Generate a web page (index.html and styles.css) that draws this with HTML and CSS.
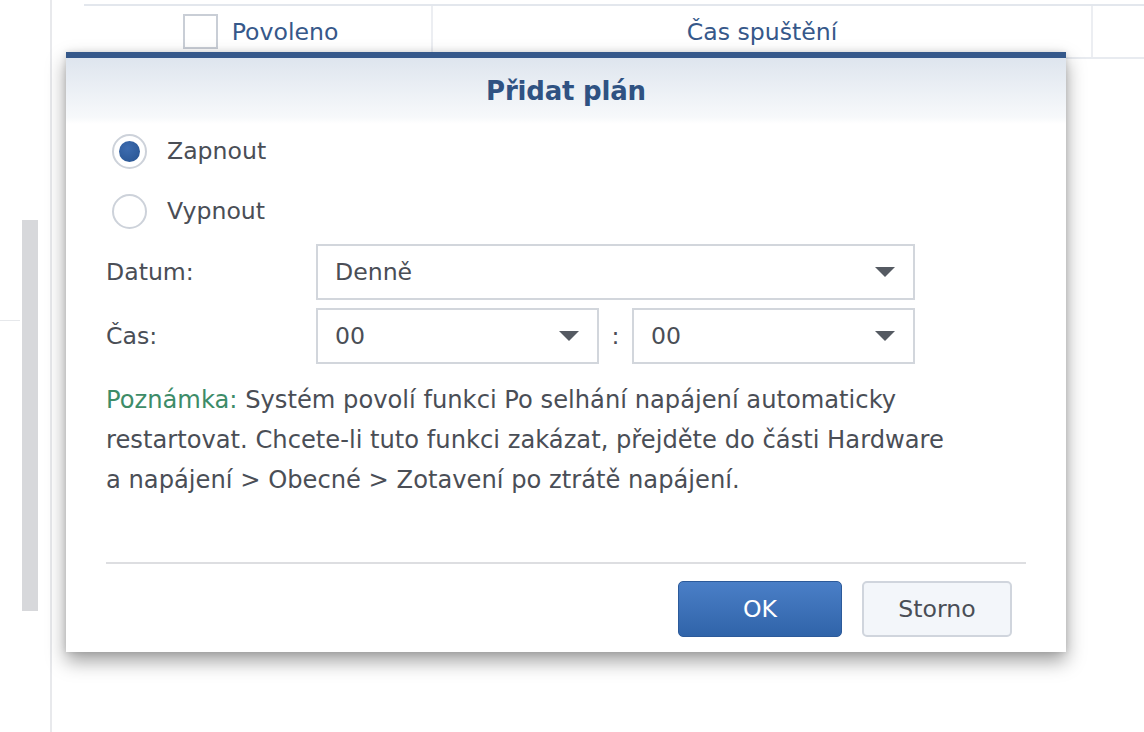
FILE: index.html
```html
<!DOCTYPE html>
<html lang="cs">
<head>
<meta charset="utf-8">
<title>Přidat plán</title>
<link rel="stylesheet" href="styles.css">
</head>
<body>
<div class="page">
  <aside class="side">
    <div class="stub"></div>
    <div class="scrollbar"></div>
  </aside>
  <main class="main">
    <div class="thead">
      <div class="th th-enabled">
        <span class="checkbox"></span>
        <span>Povoleno</span>
      </div>
      <div class="th th-time">Čas spuštění</div>
      <div class="th th-rest"></div>
    </div>
  </main>
</div>

<div class="dialog">
  <div class="dialog-head">Přidat plán</div>
  <div class="dialog-body">
    <label class="radio-row">
      <span class="radio checked"><span class="dot"></span></span>
      <span>Zapnout</span>
    </label>
    <label class="radio-row">
      <span class="radio"></span>
      <span>Vypnout</span>
    </label>

    <div class="field field-date">
      <span class="field-label">Datum:</span>
      <div class="select wide"><span>Denně</span><span class="arrow"></span></div>
    </div>
    <div class="field field-time">
      <span class="field-label">Čas:</span>
      <div class="time">
        <div class="select"><span>00</span><span class="arrow"></span></div>
        <span class="colon">:</span>
        <div class="select"><span>00</span><span class="arrow"></span></div>
      </div>
    </div>

    <p class="note"><span class="note-key">Poznámka:</span> Systém povolí funkci Po selhání napájení automaticky restartovat. Chcete-li tuto funkci zakázat, přejděte do části Hardware a napájení &gt; Obecné &gt; Zotavení po ztrátě napájení.</p>
  </div>
  <div class="dialog-foot">
    <button class="btn btn-primary">OK</button>
    <button class="btn btn-default">Storno</button>
  </div>
</div>
</body>
</html>
```

FILE: styles.css
```css
* { box-sizing: border-box; }
html, body {
  margin: 0;
  padding: 0;
  background: #fff;
  font-family: "DejaVu Sans", Verdana, sans-serif;
  color: #4a4e56;
}
.page {
  display: flex;
  height: 732px;
  overflow: hidden;
}
.side {
  width: 52px;
  flex: none;
  display: flex;
  border-right: 2px solid #e8e9ec;
}
.stub {
  width: 20px;
  height: 1px;
  margin-top: 320px;
  background: #e6e8eb;
}
.scrollbar {
  width: 16px;
  height: 391px;
  margin-top: 220px;
  margin-left: 2px;
  background: #d7d8db;
}
.main {
  flex: 1;
  padding-left: 32px;
  padding-top: 4px;
}
.thead {
  display: flex;
  height: 55px;
  border-top: 2px solid #e3e7ed;
  border-bottom: 2px solid #e8ebf0;
}
.th {
  display: flex;
  align-items: center;
  justify-content: center;
  font-size: 23.6px;
  color: #36588a;
}
.th-enabled {
  width: 349px;
  gap: 14px;
  padding-left: 6px;
  border-right: 2px solid #eceef2;
}
.th-time {
  width: 660px;
  border-right: 2px solid #eceef2;
}
.th-rest { flex: 1; }
.checkbox {
  width: 35px;
  height: 35px;
  border: 2px solid #c9ced6;
  background: #fff;
}

/* dialog (overlay) */
.dialog {
  position: absolute;
  left: 66px;
  top: 52px;
  width: 1000px;
  height: 600px;
  background: #fff;
  border-top: 6px solid #35588a;
  box-shadow: 0 9px 18px rgba(0,0,0,0.38), 0 0 6px rgba(0,0,0,0.12);
  display: flex;
  flex-direction: column;
}
.dialog-head {
  height: 66px;
  display: flex;
  align-items: center;
  justify-content: center;
  font-size: 26px;
  font-weight: bold;
  color: #2f5282;
  background: linear-gradient(#dee5ee, #f7f9fb 90%, #fff);
  letter-spacing: -0.2px;
}
.dialog-body {
  padding: 0 40px;
  flex: 1;
  font-size: 23.6px;
}
.radio-row {
  display: flex;
  align-items: center;
  height: 54px;
  gap: 20px;
  padding-left: 6px;
}
.radio-row + .radio-row { margin-top: 6px; }
.radio {
  width: 35px;
  height: 35px;
  border-radius: 50%;
  border: 2px solid #cdd2da;
  background: #fff;
  display: flex;
  align-items: center;
  justify-content: center;
}
.radio .dot {
  width: 21px;
  height: 21px;
  border-radius: 50%;
  background: radial-gradient(circle at 40% 35%, #3d6cb0, #26528f);
}
.field {
  display: flex;
  align-items: center;
}
.field-date { margin-top: 6px; }
.field-time { margin-top: 8px; }
.field-label {
  width: 210px;
  flex: none;
}
.select {
  height: 56px;
  border: 2px solid #d2d6dc;
  display: flex;
  align-items: center;
  justify-content: space-between;
  padding: 0 18px 0 17px;
  background: #fff;
  color: #4a4e56;
}
.select.wide { width: 599px; }
.time {
  display: flex;
  align-items: center;
  width: 599px;
}
.time .select { width: 283px; }
.colon {
  width: 33px;
  text-align: center;
}
.arrow {
  width: 0;
  height: 0;
  border-left: 10px solid transparent;
  border-right: 10px solid transparent;
  border-top: 10px solid #555a62;
}
.note {
  margin: 16px 0 0 0;
  line-height: 40px;
  font-size: 24.2px;
  color: #4a4e56;
  width: 850px;
}
.note-key { color: #3d8c68; }
.dialog-foot {
  margin: 0 40px;
  border-top: 2px solid #dddee1;
  height: 90px;
  display: flex;
  justify-content: flex-end;
  align-items: flex-start;
  gap: 20px;
  padding: 17px 14px 0 0;
}
.btn {
  height: 56px;
  font-family: inherit;
  font-size: 23.6px;
  border-radius: 5px;
  cursor: pointer;
}
.btn-primary {
  width: 164px;
  color: #fff;
  border: 1px solid #2c5a9a;
  background: linear-gradient(#4a7fc7, #3064a9);
}
.btn-default {
  width: 150px;
  color: #4a4e56;
  border: 2px solid #d0d5dd;
  background: #f3f6fa;
}
```
